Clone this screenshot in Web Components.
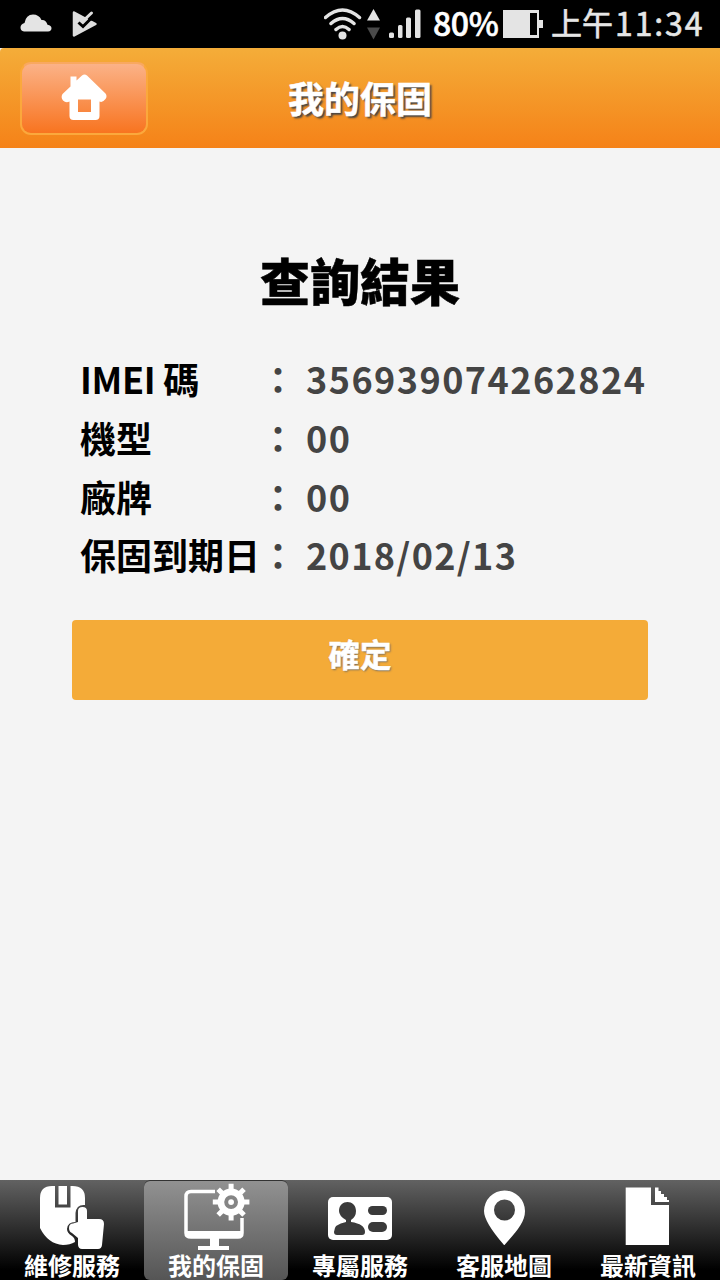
<!DOCTYPE html>
<html lang="zh-Hant">
<head>
<meta charset="utf-8">
<title>我的保固</title>
<style>
html,body{margin:0;height:100%;background:#f4f4f4}
body{font-family:"Noto Sans CJK TC","Noto Sans",sans-serif;overflow:hidden}
</style>
</head>
<body>
<warranty-app></warranty-app>
<script>
function define(name, html) {
  const t = document.createElement('template');
  t.innerHTML = html;
  customElements.define(name, class extends HTMLElement {
    constructor() {
      super();
      this.attachShadow({ mode: 'open' }).append(t.content.cloneNode(true));
    }
  });
}

define('status-bar', `
<style>
:host{display:flex;height:48px;background:#000;color:#e6e6e6;align-items:center;box-sizing:border-box;padding-left:20px;overflow:hidden;font-size:32px;line-height:46px;white-space:nowrap}
svg{display:block;flex:none}
span{margin-top:-4px}
.play{margin-left:20px}.wifi{margin-left:226px}.pct{margin-left:11px;width:70px;color:#fff;font-weight:500;letter-spacing:-.4px}
.ap{margin-left:8px;font-size:31px}
.time{margin-left:2px;letter-spacing:1.900px}
.ap,.pct,.time{-webkit-text-stroke:.6px currentColor}
</style>
<svg width="32" height="48" fill="#e4e4e4"><path d="M4 31.500q-3.500-.5-3.500-4 0-3.500 4-4.500Q6 14.500 13 14.500q6 0 8.500 5.500 4.500-.5 6 4.800 4 .5 4 3.500 0 3-3.500 3.200z"/></svg>
<svg class="play" width="26" height="48"><path d="M2 12.500 23.500 24 2 35.500z" fill="#dedede" stroke="#dedede" stroke-width="2.500" stroke-linejoin="round"/><path d="m16 20 6-9 5 6-4 4z" fill="#000"/><path d="m6.500 22.500 4.500 4L20.500 17" fill="none" stroke="#000" stroke-width="3"/><path d="m11.500 20.500 8-7.500" stroke="#dedede" stroke-width="3" stroke-linecap="round"/></svg>
<svg class="wifi" width="98" height="48" fill="none" stroke="#e4e4e4" stroke-width="3.500" stroke-linecap="round"><path d="M1.500 17.500q17-15 34 0M7 23.500q11.500-10 23 0M12 29.500q6.500-6 13 0"/><circle cx="18.500" cy="35.500" r="4" fill="#e4e4e4" stroke="none"/><path d="m49.500 9 6.500 11.500H43z" fill="#e4e4e4" stroke="none"/><path d="m49.500 39.500 6.500-12H43z" fill="#4a4a4a" stroke="none"/><g fill="#e4e4e4" stroke="none"><rect x="65" y="32.500" width="5" height="5.500" rx="1.500"/><rect x="74" y="25" width="4.500" height="13" rx="1.500"/><rect x="82" y="17.500" width="5" height="20.500" rx="1.500"/><rect x="91" y="9.500" width="5.500" height="28.500" rx="1.500"/></g></svg>
<span class="pct">80%</span>
<svg width="40" height="48"><path d="M0 10h36v10h4v8h-4v10H0z" fill="#e4e4e4"/><path d="M27 13h7v22h-7z" fill="#000"/></svg>
<span class="ap">上午</span><span class="time">11:34</span>`);

define('home-button', `
<style>
:host{display:grid;place-items:center;width:128px;height:73px;box-sizing:border-box;border:2px solid #fba83c;border-top-color:#f9a860;border-radius:11px;background:linear-gradient(#fbb287,#f87420)}
svg{display:block;margin-top:-3px}
</style>
<svg width="46" height="46" fill="#fff"><path fill-rule="evenodd" d="M9.500 2.500h6v4L21 1.500q2.500-2 5 0l18.500 18q2 2.500 0 5.500-3 4-6 2.500V42q0 4-4 4h-22q-4 0-4-4V27.500Q5 29.500 2 26.500-.5 23.500 1.500 20l8-7.500zM17 25.500V38h13V25.500z"/></svg>`);

define('app-header', `
<style>
:host{display:grid;grid-template-columns:128px 1fr 128px;align-items:center;height:100px;box-sizing:border-box;padding:0 20px;background:linear-gradient(#f4ad39,#f58218);border-top-left-radius:4px}
h1{margin:-3px 0 0;text-align:center;color:#fff;font-size:36px;line-height:52px;font-weight:700;text-shadow:2px 2px 2px #444;-webkit-text-stroke:.5px #fff}
</style>
<home-button></home-button><h1><slot></slot></h1>`);

define('result-row', `
<style>
:host{display:grid;grid-template-columns:180px 46px 1fr;height:58.670px;align-items:center;font-size:36px;line-height:58px;white-space:nowrap}
.label{font-weight:700;color:#000}
.colon{color:#444;font-weight:700}
.value{color:#444;font-weight:700;letter-spacing:var(--track,1.450px)}
</style>
<span class="label"><slot name="label"></slot></span><span class="colon">：</span><span class="value"><slot></slot></span>`);

define('confirm-button', `
<style>
:host{display:block;height:80px;box-sizing:border-box;border-radius:4px;background:#f4ab38;color:#fff;text-align:center;font-size:31.500px;font-weight:700;line-height:66px;text-shadow:1px 1px 2px #666;-webkit-text-stroke:.5px #fff}
</style><slot></slot>`);

define('nav-item', `
<style>
:host{display:flex;flex-direction:column;align-items:center;width:144px;height:100px;color:#fff}
:host([active]){background:linear-gradient(#929292,#555);border-radius:6px;box-shadow:inset 0 1px #333}
.icon{height:70px;flex:none}
.text{font-size:24px;line-height:30px;font-weight:700;white-space:nowrap}
::slotted(svg){display:block}
</style>
<div class="icon"><slot name="icon"></slot></div><span class="text"><slot></slot></span>`);

define('nav-bar', `
<style>
:host{display:flex;height:100px;background:linear-gradient(#626262,#000 90%)}
</style>
<nav-item><svg slot="icon" width="144" height="70" fill="#fff"><path d="M55 6v21.500h15.500V6h2Q85 6 85 18v7q-8.500-1-9.500 8v9q-8 0-8.500 7 0 4 5 7 3 2 3 6-5 3-12 3-15-1-23-17V18Q40 6 52 6z"/><path d="M58.500 6H67v18.500h-8.500z"/><path d="M78 42V31q0-4 4.500-4t4.500 4v8h12q5 0 5 5l-2 21q-.5 4-4 4H82q-3.500 0-4-4v-7l-6-5q-3-1-3-5 0-4.500 4-4.500z"/></svg>維修服務</nav-item>
<nav-item active><svg slot="icon" width="144" height="70" fill="#fff"><path d="M71 11.500H47q-5 0-5 5V53q0 4 5 4h47q4 0 4-4V38" fill="none" stroke="#fff" stroke-width="3.500"/><path d="M41 51h58v3q0 4-5 4H46q-5 0-5-4zM66 57h9v9h10v4H54v-4h12z"/><path d="M84.600 3.800h5v36.600h-5zM68.800 19.600h36.600v5H68.800z"/><path d="M84.600 3.800h5v36.600h-5zM68.800 19.600h36.600v5H68.800z" transform="rotate(45 87.100 22.100)"/><circle cx="87.100" cy="22.100" r="13.500"/><circle cx="87.100" cy="22.100" r="4.900" fill="none" stroke="#858585" stroke-width="4"/></svg>我的保固</nav-item>
<nav-item><svg slot="icon" width="144" height="70"><rect x="40" y="17" width="64" height="43" rx="5" fill="#fff"/><g fill="#3a3a3a"><path d="M51 31c0-12 17-12 17 0q0 6-5 9v2q14 2 14 10 0 3-3 3H49q-3 0-3-3 0-8 12-10v-2q-7-4-7-9z"/><rect x="80" y="26" width="19" height="9" rx="4.500"/><rect x="80" y="42" width="19" height="10" rx="5"/></g></svg>專屬服務</nav-item>
<nav-item><svg slot="icon" width="144" height="70"><path fill-rule="evenodd" fill="#fff" d="M72 65Q52 42 52 31a20 20 0 0 1 41 0c0 11-8 20-20.500 34zM72.500 19.500a10.500 10.500 0 1 0 0 21 10.500 10.500 0 0 0 0-21z"/></svg>客服地圖</nav-item>
<nav-item><svg slot="icon" width="144" height="70" fill="#fff"><path d="M49.700 7.500H75V25h18v40H49.700zM79 7.500h3.500v3.500H85v3h3v3h3v3h2v2H79z"/></svg>最新資訊</nav-item>`);

define('warranty-app', `
<style>
:host{display:flex;flex-direction:column;width:720px;height:1280px;background:#f4f4f4}
status-bar,app-header,nav-bar{flex:none}
main{flex:1;padding:98px 72px 0;min-height:0;background:#f4f4f4}
h2{margin:0;font-size:50px;line-height:66px;font-weight:900;text-align:center;color:#000;-webkit-text-stroke:.5px #000}
.rows{padding:37px 0 0 8px}
confirm-button{margin-top:36.300px}
</style>
<status-bar></status-bar>
<app-header>我的保固</app-header>
<main>
<h2>查詢結果</h2>
<div class="rows">
<result-row><span slot="label" style="letter-spacing:-.3px">IMEI 碼</span>356939074262824</result-row>
<result-row><span slot="label">機型</span>00</result-row>
<result-row><span slot="label">廠牌</span>00</result-row>
<result-row style="--track:1.350px"><span slot="label">保固到期日</span>2018/02/13</result-row>
</div>
<confirm-button>確定</confirm-button>
</main>
<nav-bar></nav-bar>`);
</script>
</body>
</html>
